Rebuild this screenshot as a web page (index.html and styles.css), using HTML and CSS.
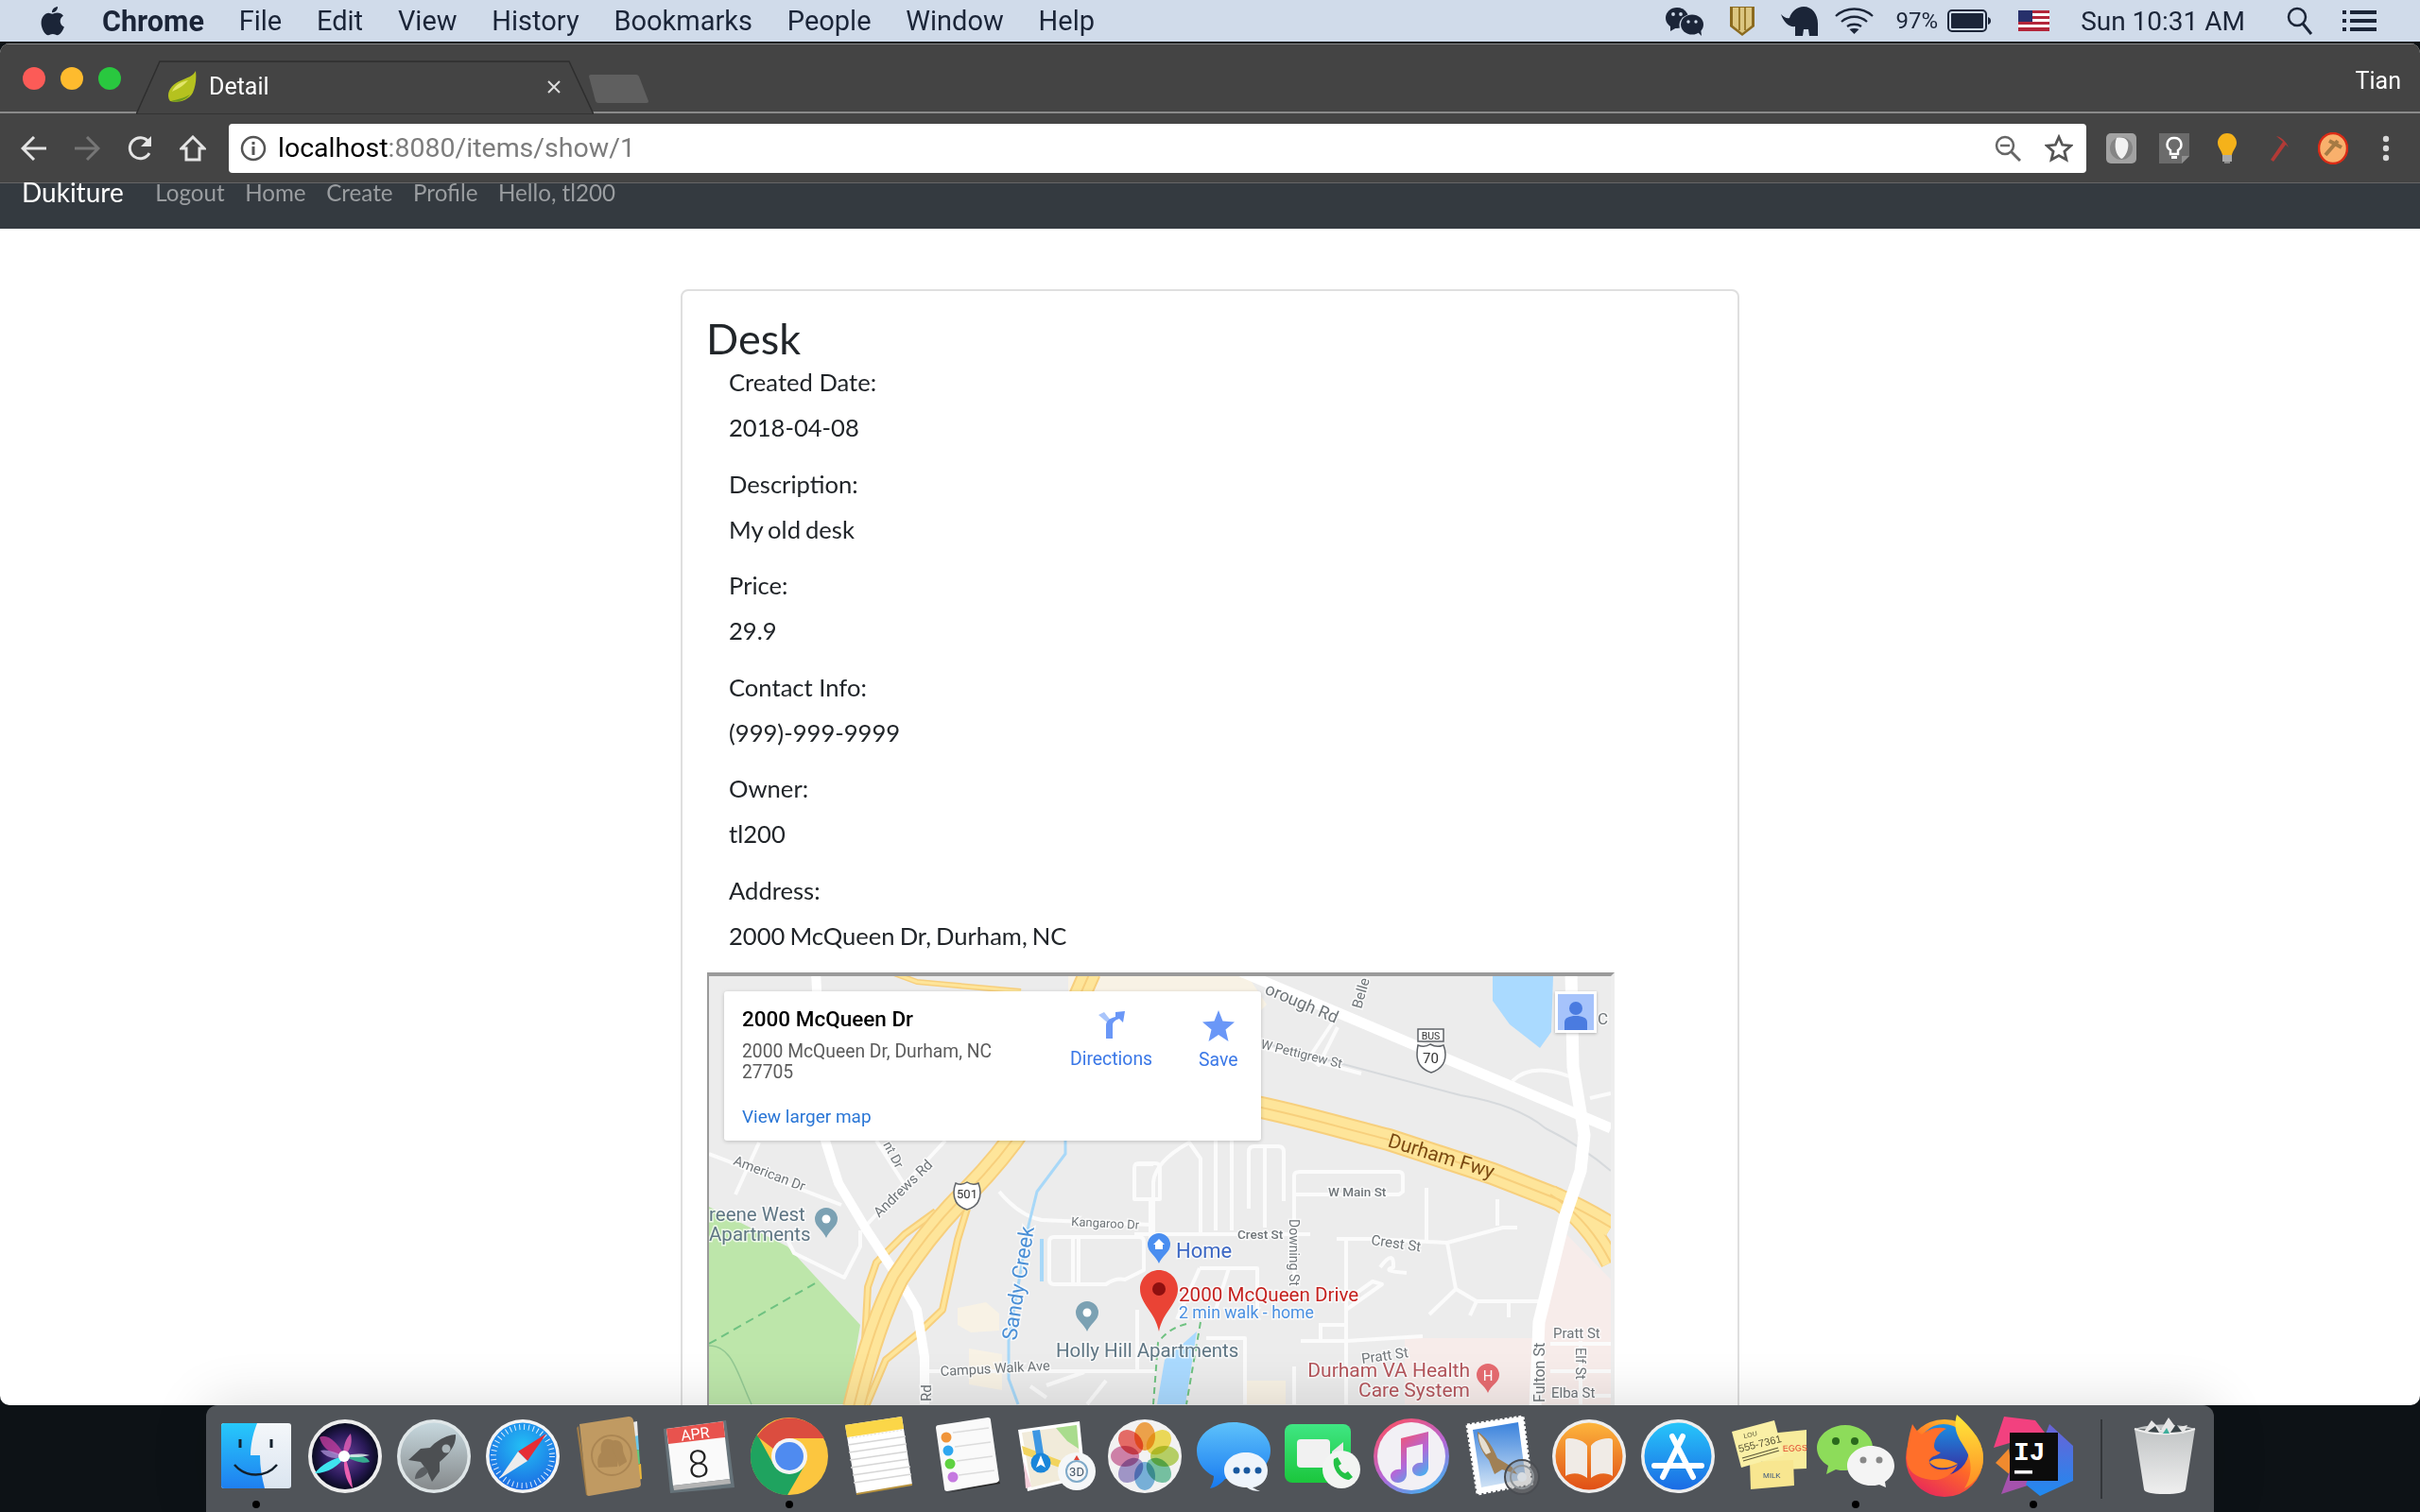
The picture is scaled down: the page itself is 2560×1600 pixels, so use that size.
FILE: index.html
```html
<!DOCTYPE html>
<html lang="en">
<head>
    <meta charset="UTF-8">
    <title>Detail</title>
    <link rel="stylesheet" href="styles.css">
</head>
<body>

<!-- macOS menu bar -->
<header class="menubar">
    <svg class="apple" width="26" height="32" viewBox="0 0 26 32"><path fill="#1b2538" d="M18 1c.3 3-2.600 6.500-6 6.200C11.700 4.200 14.800 1.300 18 1zM12.200 8.700c1.500 0 3-1.200 5.500-1.200 2.300 0 4.800 1.100 6.300 3.300-4.900 2.900-4.100 9.600.9 11.700-1.400 3.700-4.300 8.700-7.200 8.700-1.800 0-2.700-1.200-4.800-1.200-2.200 0-3.200 1.200-4.900 1.200C4.500 31.200.6 23.900.6 18.400.6 12 4.700 7.800 8.400 7.800c1.500 0 2.700.9 3.800.9z"/></svg>
    <nav class="menu-items">
        <b>Chrome</b><span>File</span><span>Edit</span><span>View</span><span>History</span><span>Bookmarks</span><span>People</span><span>Window</span><span>Help</span>
    </nav>
    <div class="status-items">
        <svg width="41" height="31" viewBox="0 0 41 31"><ellipse cx="12" cy="12" rx="12" ry="11" fill="#1b2538"/><path fill="#1b2538" d="M5 19l0 7 7-4z"/><ellipse cx="28" cy="19.500" rx="13.500" ry="11.500" fill="#d0dbea"/><ellipse cx="28" cy="19" rx="12" ry="10.500" fill="#1b2538"/><path fill="#1b2538" d="M33 26l5 5-1-8z"/><g fill="#d0dbea"><circle cx="8" cy="8" r="1.900"/><circle cx="16" cy="8" r="1.900"/><circle cx="24" cy="16" r="1.700"/><circle cx="32" cy="16" r="1.700"/></g></svg>
        <svg class="tray-shield" width="26" height="31" viewBox="0 0 26 31"><path fill="#8b6a1f" d="M0 0h26v21L13 31 0 21z"/><path fill="#dcc681" d="M3 1h20v19l-10 8-10-8z"/><path fill="#9a7b2c" d="M9 1h2v24H9zM15 1h2v24h-2z"/></svg>
        <svg class="tray-elephant" width="39" height="31" viewBox="0 0 39 31"><path fill="#1b2538" d="M0 8c3 3 6 5 9 4C11 5 17 0 24 0c9 0 15 8 15 18v13h-9l-1-7h-5l-1 7h-8V21C9 22 3 17 0 8z"/></svg>
        <svg class="tray-wifi" width="41" height="28" viewBox="0 0 41 28"><g fill="none" stroke="#1b2538" stroke-width="2.300"><path d="M1 9c11-10 28-10 39 0"/><path d="M7 15c8-7 19-7 27 0"/><path d="M13 20c4-3 11-3 15 0"/></g><path fill="#1b2538" d="M20.500 28l-5-5c3-1.500 7-1.500 10 0z"/></svg>
        <span class="tray-text">97%</span>
        <svg class="tray-battery" width="46" height="24" viewBox="0 0 46 24"><rect x="1" y="1" width="40" height="22" rx="4" fill="none" stroke="#1b2538" stroke-width="2"/><rect x="4" y="4" width="34" height="16" rx="1" fill="#1b2538"/><path fill="#1b2538" d="M43 8q3 1 3 4t-3 4z"/></svg>
        <svg class="tray-flag" width="33" height="22" viewBox="0 0 33 22"><rect width="33" height="22" fill="#fff"/><g fill="#b3263a"><rect width="33" height="3"/><rect y="6" width="33" height="3"/><rect y="12" width="33" height="3"/><rect y="18" width="33" height="4"/></g><rect width="15" height="12" fill="#27306b"/></svg>
        <span class="tray-clock">Sun 10:31 AM</span>
        <svg class="tray-search" width="28" height="30" viewBox="0 0 28 30"><circle cx="11" cy="11" r="9" fill="none" stroke="#1b2538" stroke-width="2.500"/><path d="M17 18l9 11" stroke="#1b2538" stroke-width="3"/></svg>
        <svg class="tray-list" width="36" height="24" viewBox="0 0 36 24"><g fill="#1b2538"><rect y="1" width="4" height="4"/><rect x="8" y="1" width="28" height="4"/><rect y="10" width="4" height="4"/><rect x="8" y="10" width="28" height="4"/><rect y="19" width="4" height="4"/><rect x="8" y="19" width="28" height="4"/></g></svg>
    </div>
</header>

<div class="browser">
    <!-- tab strip -->
    <div class="tabstrip">
        <div class="traffic">
            <i class="light red"></i><i class="light yellow"></i><i class="light green"></i>
        </div>
        <div class="tab">
            <svg class="tab-shape" width="484" height="57" viewBox="0 0 484 57"><path d="M0 57L25 1h433l26 56z" fill="#444" stroke="#2e2e2e" stroke-width="1.500"/></svg>
            <svg class="favicon" width="32" height="33" viewBox="0 0 32 33"><path fill="#b5c21f" d="M30 0c-3 6-9 7-15 10C7 13 1 19 1 26c0 3 1 5 2 6 8 2 19 0 24-9 3-7 4-15 3-23z"/><path fill="#e3e66a" d="M22 10c-6 1-14 4-17 12 6-3 12-6 17-12z"/><path fill="#6f9a1c" d="M4 32c6-2 14-3 20-7-5 6-13 9-20 7z"/></svg>
            <span class="tab-title">Detail</span>
            <svg class="tab-close" width="14" height="14" viewBox="0 0 14 14"><path d="M1 1l12 12M13 1L1 13" stroke="#ddd" stroke-width="2"/></svg>
        </div>
        <svg class="new-tab" width="63" height="30" viewBox="0 0 63 30"><path fill="#5f5f5f" d="M0 2q0-2 2-2h48q2 0 3 2l10 26q0 2-2 2H10q-2 0-3-2z"/></svg>
        <span class="profile">Tian</span>
    </div>

    <!-- toolbar -->
    <div class="toolbar">
        <button class="tool"><svg width="28" height="26" viewBox="0 0 28 26"><path d="M14 1L2 13l12 12M2 13h25" fill="none" stroke="#e4e4e4" stroke-width="3"/></svg></button>
        <button class="tool"><svg width="28" height="26" viewBox="0 0 28 26"><path d="M14 1l12 12-12 12M26 13H1" fill="none" stroke="#767676" stroke-width="3"/></svg></button>
        <button class="tool"><svg width="28" height="30" viewBox="0 0 28 30"><path d="M24 20a11 11 0 1 1-1-12" fill="none" stroke="#e4e4e4" stroke-width="3"/><path fill="#e4e4e4" d="M26 2v11H15z"/></svg></button>
        <button class="tool"><svg width="28" height="28" viewBox="0 0 28 28"><path d="M14 2L2 14h5v12h14V14h5z" fill="none" stroke="#e4e4e4" stroke-width="3"/></svg></button>
        <div class="omnibox">
            <svg class="site-info" width="28" height="28" viewBox="0 0 28 28"><circle cx="14" cy="14" r="12" fill="none" stroke="#555" stroke-width="2.500"/><rect x="12.500" y="12" width="3" height="9" fill="#555"/><rect x="12.500" y="7" width="3" height="3" fill="#555"/></svg>
            <span class="url"><b>localhost</b>:8080/items/show/1</span>
            <svg class="omni-zoom" width="28" height="28" viewBox="0 0 28 28"><circle cx="11" cy="11" r="9" fill="none" stroke="#666" stroke-width="2.500"/><path d="M6 11h10" stroke="#666" stroke-width="2.500"/><path d="M17 17l10 10" stroke="#666" stroke-width="3"/></svg>
            <svg class="omni-star" width="30" height="30" viewBox="0 0 30 30"><path d="M15 3l3.700 8.300 9 .9-6.800 6 2 8.800L15 22.500 7.100 27l2-8.800-6.800-6 9-.9z" fill="none" stroke="#555" stroke-width="2.800"/></svg>
        </div>
        <div class="extensions">
            <button class="tool"><svg width="32" height="32" viewBox="0 0 32 32"><rect width="32" height="32" rx="5" fill="#a2a2a2"/><circle cx="16" cy="16" r="12" fill="#858585"/><path fill="#f2f2f2" d="M11 5c9-2 14 3 12 11-1 6-5 11-7 11-6-4-8-14-5-22z"/></svg></button>
            <button class="tool"><svg width="32" height="32" viewBox="0 0 32 32"><path fill="#6b6b6b" d="M0 0h32v24l-8 8H0z"/><path fill="#8f8f8f" d="M24 32v-8h8z"/><path d="M16 5a7 7 0 0 0-4 13v4h8v-4a7 7 0 0 0-4-13z" fill="none" stroke="#fff" stroke-width="2.500"/><rect x="13" y="24" width="6" height="3" fill="#fff"/></svg></button>
            <button class="tool"><svg width="22" height="32" viewBox="0 0 22 32"><path fill="#f5b21a" d="M11 0c6 0 10 5 10 10 0 5-4 8-5 13H6C5 18 1 15 1 10 1 5 5 0 11 0z"/><rect x="6" y="23" width="10" height="7" fill="#a8a8a8"/><rect x="8" y="30" width="6" height="2" fill="#888"/></svg></button>
            <button class="tool"><svg width="24" height="30" viewBox="0 0 24 30"><path d="M8 2c5 1 10 5 13 12l-3-3L5 29l-3-2L15 8z" fill="#b23a36"/></svg></button>
            <button class="tool"><svg width="32" height="34" viewBox="0 0 32 34"><ellipse cx="16" cy="17" rx="15" ry="16" fill="#f9b06c" stroke="#d92b16" stroke-width="2.500"/><path d="M8 24l13-15M12 9l13 7" stroke="#a67a44" stroke-width="4"/></svg></button>
            <button class="tool"><svg width="8" height="28" viewBox="0 0 8 28"><circle cx="4" cy="4" r="3.200" fill="#d8d8d8"/><circle cx="4" cy="14" r="3.200" fill="#d8d8d8"/><circle cx="4" cy="24" r="3.200" fill="#d8d8d8"/></svg></button>
        </div>
    </div>

    <!-- site navbar -->
    <nav class="navbar">
        <a class="brand">Dukiture</a>
        <a class="nav-link">Logout</a>
        <a class="nav-link">Home</a>
        <a class="nav-link">Create</a>
        <a class="nav-link">Profile</a>
        <a class="nav-link">Hello, tl200</a>
    </nav>

    <main class="content">
        <section class="card">
            <h2>Desk</h2>
            <div class="field"><label>Created Date:</label><p>2018-04-08</p></div>
            <div class="field"><label>Description:</label><p>My old desk</p></div>
            <div class="field"><label>Price:</label><p>29.9</p></div>
            <div class="field"><label>Contact Info:</label><p>(999)-999-9999</p></div>
            <div class="field"><label>Owner:</label><p>tl200</p></div>
            <div class="field"><label>Address:</label><p>2000 McQueen Dr, Durham, NC</p></div>

            <!-- embedded map, viewBox uses page coordinates -->
            <div class="map">
                <svg class="map-canvas" width="954" height="592" viewBox="750 1034 954 592">
                    <rect x="750" y="1034" width="954" height="592" fill="#ececec"/>
                    <path fill="#f8f2e5" d="M1130 1034h190l20 30-40 40h-170z"/>
                    <path fill="#bde6aa" d="M750 1278l83 42 77 83-14 84H750z"/>
                    <path d="M750 1423l114-65" fill="none" stroke="#6fc281" stroke-width="2" stroke-dasharray="9 6"/>
                    <path d="M750 1425c25 0 30 30 45 62" fill="none" stroke="#93c893" stroke-width="1.500"/>
                    <path fill="#f7ecea" d="M1655 1305l49 50v132h-218v-70h142z"/>
                    <path fill="#f8f2e5" d="M1013 1385l30-6 14 12v18l-30 2-14-8zM1025 1428l35 6v38l-35-6zM1315 1462h45v25h-45z"/>
                    <path fill="#aadaff" d="M1579 1034h64l-2 59-12 17-32-25-18-25z"/>
                    <path fill="#aadaff" d="M1232 1440l34-30-12 77h-30z"/>

                    <!-- local roads -->
                    <g fill="none" stroke="#fbfbfb" stroke-width="4" stroke-linejoin="round">
                        <path d="M750 1222l140 54"/>
                        <path d="M917 1297l83-89"/>
                        <path d="M927 1208l30 47"/>
                        <path d="M803 1210l-25 55"/>
                        <path d="M1057 1262q22 26 45 30l115 5"/>
                        <path d="M983 1452h240"/>
                        <path d="M833 1313l7 14 53 26 17-33v-17"/>
                        <path d="M1115 1310h90q5 0 5 5v30l-20 10q-10-2-20 5h-55q-5 0-5-5v-40q0-5 5-5zM1135 1310v50M1141 1310v50"/>
                        <path d="M1200 1270v-33q0-5 5-5h17q5 0 5 5v33zM1217 1270v47M1203 1387v65"/>
                        <path d="M1200 1233h20M1220 1307v-55q2-22 38-42l12 17v80M1200 1307h186"/>
                        <path d="M1286 1208v95M1303 1208v95"/>
                        <path d="M1321 1280v-60q0-6 6-6h25q6 0 6 6v52M1338 1214v86"/>
                        <path d="M1369 1360v-115q0-4 6-4h105q4 0 4 5v16l-4 3h-111"/>
                        <path d="M1414 1312h36l81 4 59-16h15M1509 1258v57M1584 1270v28"/>
                        <path d="M1531 1316l9 49 22 13h66M1540 1365l-28 27M1562 1378l-7 15M1596 1378v17"/>
                        <path d="M1424 1312v175M1424 1387l38-27-10-3-28 20"/>
                        <path d="M1376 1420h48l81-5M1397 1403v17M1395 1403h29"/>
                        <path d="M1269 1343h61v47M1269 1343l-24 54M1300 1343l-14 44"/>
                        <path d="M1276 1417h41v70M1369 1447v40"/>
                        <path d="M1460 1342q15-20 14 0-14 4 14 6"/>
                        <path d="M1440 1137l-105-28M1415 1075l-30 45 10 8 20-40"/>
                        <path d="M1600 1145q20-20 60-5M1682 1163l22-5"/>
                        <path d="M1640 1423h64M1640 1452h64M1640 1478h64M1672 1420v67"/>
                        <path d="M1090 1468l17 12M1107 1467l40-14M1150 1487l20-25"/>
                    </g>
                    <path d="M1334 1104l211 56q60 10 90 35 40 20 69 45" fill="none" stroke="#d6d9dc" stroke-width="2"/>
                    <path d="M1127 1208v14l-30 40-9 36-21 122v40l10 27" fill="none" stroke="#a8d8f8" stroke-width="3"/>
                    <path d="M1102 1312v45" stroke="#a8d8f8" stroke-width="4"/>
                    <path d="M1255 1402q-20 5-30 20l-5 65M1270 1400l-15 87" fill="none" stroke="#6fc281" stroke-width="2" stroke-dasharray="7 5"/>

                    <!-- ramps, then white roads, then highways on top -->
                    <g fill="none" stroke-linejoin="round" stroke-linecap="butt">
                        <path stroke="#f7cf7c" stroke-width="8" d="M990 1283l-33 24-30 30-9 26-3 57v70"/>
                        <path stroke="#fee59a" stroke-width="4" d="M990 1283l-33 24-30 30-9 26-3 57v70"/>
                        <path stroke="#f7cf7c" stroke-width="8" d="M1023 1280l-10 33-13 60-3 14-27 26-33 27-20 47"/>
                        <path stroke="#fee59a" stroke-width="4" d="M1023 1280l-10 33-13 60-3 14-27 26-33 27-20 47"/>
                        <path stroke="#f7cf7c" stroke-width="6" d="M943 1030l27 10 33 3 77 7"/>
                        <path stroke="#fee59a" stroke-width="3" d="M943 1030l27 10 33 3 77 7"/>
                    </g>
                    <g fill="none" stroke="#fff" stroke-linejoin="round">
                        <path stroke-width="10" d="M863 1030l10 178 14 45 30 50 33 50 20 34 8 50v50"/>
                        <path stroke-width="11" d="M1310 1028l394 167"/>
                    </g>
                    <g fill="none" stroke-linejoin="round">
                        <path stroke="#f7cf7c" stroke-width="24" d="M1153 1030l-70 160q-23 35-60 73-38 37-73 90-25 47-47 137"/>
                        <path stroke="#fee59a" stroke-width="20" d="M1153 1030l-70 160q-23 35-60 73-38 37-73 90-25 47-47 137"/>
                        <path stroke="#f7cf7c" stroke-width="2" d="M1153 1030l-70 160q-23 35-60 73-38 37-73 90-25 47-47 137"/>
                        <path stroke="#f7cf7c" stroke-width="24" d="M1320 1170c60 12 100 25 149 37l110 36 69 27q30 14 56 30"/>
                        <path stroke="#f7cf7c" stroke-width="22" d="M1640 1265q40 25 64 72"/>
                        <path stroke="#fee59a" stroke-width="20" d="M1320 1170c60 12 100 25 149 37l110 36 69 27q30 14 56 30"/>
                        <path stroke="#fee59a" stroke-width="18" d="M1640 1265q40 25 64 72"/>
                        <path stroke="#f7cf7c" stroke-width="2" d="M1320 1170c60 12 100 25 149 37l110 36 69 27q30 14 56 30M1640 1265q40 25 64 72"/>
                    </g>
                    <path fill="none" stroke="#fff" stroke-width="13" stroke-linejoin="round" d="M1662 1030l2 100 12 72-4 38-17 50-27 110-4 90"/>

                    <!-- labels -->
                    <g class="label road">
                        <text transform="translate(1337 1052) rotate(23)" font-size="18">orough Rd</text>
                        <text transform="translate(1440 1069) rotate(-74)" font-size="15">Belle</text>
                        <text transform="translate(1333 1110) rotate(14)" font-size="13.500">W Pettigrew St</text>
                        <text x="1405" y="1267" font-size="13.500" font-weight="500">W Main St</text>
                        <text x="1309" y="1312" font-size="13.500" font-weight="500">Crest St</text>
                        <text transform="translate(1450 1318) rotate(8)" font-size="15">Crest St</text>
                        <text transform="translate(1364 1291) rotate(90)" font-size="14">Downing St</text>
                        <text transform="translate(775 1233) rotate(21)" font-size="14.500">American Dr</text>
                        <text transform="translate(930 1290) rotate(-44)" font-size="15">Andrews Rd</text>
                        <text transform="translate(934 1212) rotate(62)" font-size="14">nt Dr</text>
                        <text transform="translate(1133 1298) rotate(3)" font-size="13">Kangaroo Dr</text>
                        <text transform="translate(995 1457) rotate(-3)" font-size="14.500">Campus Walk Ave</text>
                        <text transform="translate(985 1484) rotate(-90)" font-size="15">Rd</text>
                        <text transform="translate(1441 1444) rotate(-8)" font-size="15">Pratt St</text>
                        <text x="1643" y="1417" font-size="15">Pratt St</text>
                        <text transform="translate(1667 1427) rotate(90)" font-size="14.500">Elf St</text>
                        <text x="1641" y="1480" font-size="15">Elba St</text>
                        <text transform="translate(1634 1485) rotate(-90)" font-size="16">Fulton St</text>
                        <text x="1690" y="1085" font-size="17">C</text>
                    </g>
                    <text class="label fwy" transform="translate(1467 1214) rotate(17)" font-size="21">Durham Fwy</text>
                    <text class="label creek" transform="translate(1075 1420) rotate(-81)" font-size="22">Sandy Creek</text>
                    <g class="label poi">
                        <text x="750" y="1293" font-size="20.500">reene West</text>
                        <text x="750" y="1314" font-size="20.500">Apartments</text>
                        <text x="1117" y="1437" font-size="20.500">Holly Hill Apartments</text>
                    </g>
                    <text class="label home" x="1244" y="1332" font-size="22">Home</text>
                    <text class="label place" x="1247" y="1378" font-size="20.600">2000 McQueen Drive</text>
                    <text class="label walk" x="1247" y="1396" font-size="17.700">2 min walk - home</text>
                    <g class="label hospital" text-anchor="end">
                        <text x="1555" y="1458" font-size="21">Durham VA Health</text>
                        <text x="1555" y="1479" font-size="21">Care System</text>
                    </g>

                    <!-- pins -->
                    <path fill="#7ba1b3" d="M874 1279a12 12 0 0 1 12 12c0 8-9 12-12 20-3-8-12-12-12-20a12 12 0 0 1 12-12z"/><circle cx="874" cy="1291" r="4.500" fill="#fff"/>
                    <path fill="#7ba1b3" d="M1150 1378a12 12 0 0 1 12 12c0 8-9 12-12 20-3-8-12-12-12-20a12 12 0 0 1 12-12z"/><circle cx="1150" cy="1390" r="4.500" fill="#fff"/>
                    <path fill="#4a8ef0" d="M1226 1306a12 12 0 0 1 12 12c0 8-9 12-12 20-3-8-12-12-12-20a12 12 0 0 1 12-12z"/><path fill="#fff" d="M1226 1312l6 6h-2v5h-8v-5h-2z"/>
                    <path fill="#e66b70" d="M1574 1444a12 12 0 0 1 12 12c0 8-9 11-12 19-3-8-12-11-12-19a12 12 0 0 1 12-12z"/><text class="label pin-h" x="1574" y="1462" font-size="15" text-anchor="middle">H</text>
                    <path fill="#ea4335" d="M1226 1345c11 0 20 9 20 20 0 16-16 24-20 45-4-21-20-29-20-45 0-11 9-20 20-20z"/><circle cx="1226" cy="1365" r="7" fill="#8f1010"/>

                    <!-- highway shields -->
                    <path fill="#fff" stroke="#5f6368" stroke-width="1.500" d="M1011 1253q6 3 12-1 6 4 12 1 2 5 2 10 0 14-14 18-14-4-14-18 0-5 2-10z"/>
                    <text class="label shield" x="1023" y="1269" font-size="13" text-anchor="middle">501</text>
                    <rect x="1500" y="1090" width="27" height="13" fill="#fff" stroke="#5f6368" stroke-width="1.500"/>
                    <text class="label shield" x="1513.500" y="1101" font-size="10.500" text-anchor="middle">BUS</text>
                    <path fill="#fff" stroke="#5f6368" stroke-width="1.500" d="M1500 1107q7 3 13-1 7 4 14 1 2 5 2 10 0 14-15 19-15-5-15-19 0-5 1-10z"/>
                    <text class="label shield" x="1513.500" y="1126" font-size="15" text-anchor="middle">70</text>
                </svg>

                <!-- pegman button -->
                <div class="pegman">
                    <svg width="38" height="38" viewBox="0 0 38 38"><rect width="38" height="38" fill="#a6c3fb"/><circle cx="19" cy="15" r="7" fill="#4a7be0"/><path fill="#4a7be0" d="M7 38v-8c0-5 5-7 12-7s12 2 12 7v8z"/></svg>
                </div>

                <!-- info window -->
                <div class="place-card">
                    <div class="place-info">
                        <div class="place-name">2000 McQueen Dr</div>
                        <div class="place-address">2000 McQueen Dr, Durham, NC 27705</div>
                        <a class="place-link">View larger map</a>
                    </div>
                    <div class="place-action directions">
                        <svg width="30" height="30" viewBox="0 0 30 30"><path fill="#a9c5fb" d="M1 5l6-3 8 10v5z"/><path fill="#6a97f7" d="M16 30h-7V16c0-5 5-8 10-9V2l10-1-2 12-4-4c-3 1-7 3-7 7z"/></svg>
                        <span>Directions</span>
                    </div>
                    <div class="place-action save">
                        <svg width="34" height="33" viewBox="0 0 34 33"><path fill="#6a97f7" d="M17 0l4.500 11.500L34 12.500l-9.500 8L27.500 33 17 26 6.500 33l3-12.500-9.500-8 12.500-1z"/></svg>
                        <span>Save</span>
                    </div>
                </div>
            </div>
        </section>
    </main>
</div>

<!-- dock: every icon is an 88px box centred on its slot -->
<footer class="dock">
    <div class="dock-item on">
        <svg width="88" height="88" viewBox="0 0 88 88"><defs><linearGradient id="fin" x1="0" y1="0" x2="0" y2="1"><stop offset="0" stop-color="#27c9fb"/><stop offset="1" stop-color="#1f7ff0"/></linearGradient><linearGradient id="fin2" x1="0" y1="0" x2="0" y2="1"><stop offset="0" stop-color="#f4f7fa"/><stop offset="1" stop-color="#dbe5f0"/></linearGradient></defs><rect x="7" y="9" width="74" height="69" rx="3" fill="url(#fin2)"/><path fill="url(#fin)" d="M10 9h35c-4 10-7 22-7 34h10c0 12 2 24 5 35H10q-3 0-3-3V12q0-3 3-3z"/><path d="M27 26v9M60 26v9" stroke="#13202c" stroke-width="3"/><path d="M21 53c12 14 33 14 45 0" fill="none" stroke="#13202c" stroke-width="2.500"/></svg>
    </div>
    <div class="dock-item">
        <svg width="88" height="88" viewBox="0 0 88 88"><defs><radialGradient id="sir"><stop offset="0" stop-color="#6a3f9c"/><stop offset=".65" stop-color="#2a1a58"/><stop offset="1" stop-color="#090b20"/></radialGradient></defs><circle cx="44" cy="44" r="39" fill="#ededed"/><circle cx="44" cy="44" r="35" fill="url(#sir)"/><path fill="#c83fa0" opacity=".75" d="M44 44C34 26 24 20 17 24c3 12 12 18 27 20z"/><path fill="#b79be0" opacity=".7" d="M44 44c-10-4-20-8-26-6 6 8 16 10 26 6z"/><path fill="#e660b8" opacity=".8" d="M42 44c0-10 2-18 8-24 2 10 0 18-8 24z"/><path fill="#3fe3ee" d="M44 44C30 46 18 54 12 62 26 62 38 54 44 44z"/><path fill="#35b894" opacity=".9" d="M44 44c10 6 20 8 26 6-2-6-14-10-26-6z"/><path fill="#e8f6f2" opacity=".8" d="M44 44c8-3 18-3 26-1-8 2-18 3-26 1z"/><path fill="#ea5fb0" d="M44 44c3 10 7 22 8 34-7-8-11-22-8-34z"/><circle cx="43" cy="44" r="6" fill="#fff"/></svg>
    </div>
    <div class="dock-item">
        <svg width="88" height="88" viewBox="0 0 88 88"><defs><linearGradient id="lau" x1="0" y1="0" x2="0" y2="1"><stop offset="0" stop-color="#c7d8de"/><stop offset="1" stop-color="#85898b"/></linearGradient></defs><circle cx="44" cy="44" r="39" fill="#dfe6e8"/><circle cx="44" cy="44" r="35.500" fill="url(#lau)"/><path fill="#4c4f52" d="M67 21c-7 0-19 5-27 14l-10 1-13 12 13 2 6 8 6 13 8-11v-10c10-8 18-18 17-29z"/><circle cx="57" cy="36" r="4.500" fill="#aab5b9"/><path fill="#5a5e62" d="M34 55c-8 3-10 9-10 13 6 0 12-4 14-8z"/></svg>
    </div>
    <div class="dock-item">
        <svg width="88" height="88" viewBox="0 0 88 88"><defs><radialGradient id="saf" cy=".35" r=".75"><stop offset="0" stop-color="#23c0f5"/><stop offset="1" stop-color="#1a5fe0"/></radialGradient></defs><circle cx="44" cy="44" r="39" fill="#f4f4f4"/><circle cx="44" cy="44" r="35.500" fill="url(#saf)"/><circle cx="44" cy="44" r="31" fill="none" stroke="#fff" stroke-width="6" stroke-dasharray="1 3.900" opacity=".85"/><path fill="#e62e35" d="M69 20L39 39l10 10z"/><path fill="#ececec" d="M19 68l30-19-10-10z"/></svg>
    </div>
    <div class="dock-item">
        <svg width="88" height="88" viewBox="0 0 88 88"><path fill="#e9e9e9" d="M66 8l5-1 1 16-4 1z"/><path fill="#6bc8ec" d="M68 23l4-1 1 15-4 1z"/><path fill="#62cc7d" d="M69 38l4-1 1 15-4 1z"/><path fill="#ecb83a" d="M71 53l4-1 1 16-4 1z"/><path fill="#9c7a48" d="M9 12l11 74-3-1L7 14z"/><path fill="#c09a62" d="M10 10l52-8q4 0 5 4l8 68q0 2-3 3L20 86q-2 0-2-2z"/><circle cx="44" cy="43" r="21" fill="none" stroke="#ab8653" stroke-width="2"/><path fill="#ab8653" d="M30 56c-2-8 0-13 3-16-2-10 3-15 8-14 6 0 9 7 7 15 3 3 3 9 2 14z"/><path fill="#ab8653" d="M44 28c6-3 12 1 12 8 0 6 4 10 4 14l-8 5-3-10c-3-5-5-10-5-17z"/></svg>
    </div>
    <div class="dock-item">
        <svg width="88" height="88" viewBox="0 0 88 88"><path fill="#66737a" d="M5 15l66-9 9 71-68 6z"/><path fill="#fafafa" d="M8 15l60-8 7 61-60 7z"/><path fill="#e8534e" d="M8 15l60-8 2 17-60 7z"/><text class="cal-month" transform="translate(39 26) rotate(-7)" font-size="16" text-anchor="middle">APR</text><text class="cal-day" transform="translate(43 66) rotate(-5)" font-size="40" text-anchor="middle">8</text><path fill="#b4b4b4" d="M15 75l60-7 1 5-60 7z"/></svg>
    </div>
    <div class="dock-item on">
        <svg width="88" height="88" viewBox="0 0 88 88"><circle cx="44" cy="44" r="41" fill="#fcc63f"/><path fill="#1fa35f" d="M10 21A41 41 0 0 0 42 85l18-31-33-2z"/><path fill="#db4d3f" d="M10 23A41 41 0 0 1 81 25H44L27 36z"/><circle cx="44" cy="44" r="19" fill="#f4f4f4"/><circle cx="44" cy="44" r="15" fill="#4f8bf0"/></svg>
    </div>
    <div class="dock-item">
        <svg width="88" height="88" viewBox="0 0 88 88"><path fill="#fff" d="M9 11l60-9 11 72-59 10z"/><path fill="#fbd648" d="M9 11l60-9 2 13-60 9z"/><g stroke="#d6d6d6" stroke-width="1.500"><path d="M12 32l61-9M13 40l61-9M14 48l61-9M15 56l61-9M17 64l61-9M18 72l61-9"/></g><path d="M12 25l59-9" stroke="#ddd" stroke-dasharray="2 2"/><path fill="#b7923e" d="M21 83l59-10v2L21 85z"/></svg>
    </div>
    <div class="dock-item">
        <svg width="88" height="88" viewBox="0 0 88 88"><path fill="#2b2b2b" d="M21 83l58-10-1-3z"/><path fill="#fafafa" d="M14 11l52-8q3 0 3 3l9 63q0 2-3 3l-52 9q-3 0-3-3l-9-64q0-3 3-3z"/><g fill="none" stroke="#dcdcdc" stroke-width="1.500"><path d="M29 19l38-5M31 34l38-5M33 49l38-5M35 64l38-5"/></g><circle cx="22" cy="24" r="5.500" fill="#f0953a"/><circle cx="24" cy="38" r="5.500" fill="#2fa7f0"/><circle cx="26" cy="52" r="5.500" fill="#5fd241"/><circle cx="29" cy="66" r="5.500" fill="#c579e0"/></svg>
    </div>
    <div class="dock-item">
        <svg width="88" height="88" viewBox="0 0 88 88"><path fill="#fff" d="M4 16L69 7l6 60-61 14z"/><path fill="#f1ebda" d="M8 19l58-8 5 53-53 13z"/><path fill="#a9dc8d" d="M44 14l22-3 2 25-12-8z"/><path fill="#f2d45e" d="M8 33l58 22-2 7L10 42z"/><path fill="#f5cfdb" d="M10 50l8 26-6 2z"/><path fill="#3d97e3" d="M19 17l8-1 6 38h-8z"/><circle cx="28" cy="51" r="10.500" fill="#1a86da"/><path fill="#fff" d="M28 43l5 13-5-3-5 3z"/><circle cx="66" cy="60" r="20" fill="#f5f7f8"/><circle cx="66" cy="60" r="11" fill="none" stroke="#7faac9" stroke-width="2"/><text class="map-3d" x="66" y="65" font-size="13" text-anchor="middle">3D</text><path fill="#e04438" d="M66 43l3 5h-6z"/></svg>
    </div>
    <div class="dock-item">
        <svg width="88" height="88" viewBox="0 0 88 88"><circle cx="44" cy="44" r="39" fill="#f2f2f2"/><g transform="translate(44 44)"><g class="petals"><ellipse cy="-21" rx="11" ry="15" fill="#f9a13a"/><ellipse cy="-21" rx="11" ry="15" fill="#f6e04b" transform="rotate(45)"/><ellipse cy="-21" rx="11" ry="15" fill="#b8d55a" transform="rotate(90)"/><ellipse cy="-21" rx="11" ry="15" fill="#6cc3a0" transform="rotate(135)"/><ellipse cy="-21" rx="11" ry="15" fill="#6fb1e0" transform="rotate(180)"/><ellipse cy="-21" rx="11" ry="15" fill="#9f92cc" transform="rotate(225)"/><ellipse cy="-21" rx="11" ry="15" fill="#d47aa8" transform="rotate(270)"/><ellipse cy="-21" rx="11" ry="15" fill="#f0615b" transform="rotate(315)"/></g></g></svg>
    </div>
    <div class="dock-item">
        <svg width="88" height="88" viewBox="0 0 88 88"><defs><linearGradient id="msg" x1="0" y1="0" x2="0" y2="1"><stop offset="0" stop-color="#5ec2fb"/><stop offset="1" stop-color="#1779f0"/></linearGradient></defs><path fill="url(#msg)" d="M44 8c22 0 39 13 39 30S66 68 44 68c-3 0-6 0-9 0-4 5-10 9-16 10 2-4 4-8 4-13C12 60 5 50 5 38 5 21 22 8 44 8z"/><path fill="#eef4fb" d="M57 40c13 0 23 8 23 19s-8 17-16 18c3 2 6 3 8 4-5 0-10-1-14-4-13 0-24-7-24-18s10-19 23-19z"/><circle cx="47" cy="59" r="3.500" fill="#18589f"/><circle cx="58" cy="59" r="3.500" fill="#18589f"/><circle cx="70" cy="59" r="3.500" fill="#18589f"/></svg>
    </div>
    <div class="dock-item">
        <svg width="88" height="88" viewBox="0 0 88 88"><defs><linearGradient id="ft" x1="0" y1="0" x2="0" y2="1"><stop offset="0" stop-color="#3fe683"/><stop offset="1" stop-color="#1bc63c"/></linearGradient></defs><rect x="4" y="10" width="70" height="62" rx="8" fill="url(#ft)"/><rect x="17" y="26" width="35" height="30" rx="4" fill="#f1f1f1"/><path fill="#e8e8e8" d="M54 39l12-10v27H54z"/><circle cx="64" cy="58" r="20" fill="#f2f4f2"/><path fill="#23c246" d="M56 47l4-2 4 7-3 2c1 4 4 7 7 8l3-2 5 6-4 3c-10-1-18-12-16-22z"/></svg>
    </div>
    <div class="dock-item">
        <svg width="88" height="88" viewBox="0 0 88 88"><defs><linearGradient id="itr" x1=".2" y1="0" x2=".8" y2="1"><stop offset="0" stop-color="#fb5065"/><stop offset=".55" stop-color="#b467d8"/><stop offset="1" stop-color="#38b8f2"/></linearGradient></defs><circle cx="44" cy="44" r="40" fill="url(#itr)"/><circle cx="44" cy="44" r="36" fill="#f2f0f5"/><path fill="url(#itr)" d="M33 25l29-7v38c0 5-4 9-9 9s-8-3-8-7 5-8 11-7V31l-17 4v28c0 5-4 9-9 9s-8-3-8-7 5-8 11-7z"/></svg>
    </div>
    <div class="dock-item">
        <svg width="88" height="88" viewBox="0 0 88 88"><defs><linearGradient id="sky" x1="0" y1="0" x2="0" y2="1"><stop offset="0" stop-color="#3a82dc"/><stop offset="1" stop-color="#cfe2f5"/></linearGradient></defs><path fill="#fff" stroke="#fff" stroke-width="3" stroke-dasharray="3 2" d="M9 11l59-9 9 71-57 11z"/><path fill="#fff" d="M9 11l59-9 9 71-57 11z"/><path fill="url(#sky)" d="M15 16l48-8 8 60-47 9z"/><path fill="#a08055" d="M20 18c10 6 16 16 21 28l15 9 6 8-16-5-8 5-6-15c-8-8-12-20-12-30z"/><path fill="#e6dfd2" d="M21 20c6 5 10 12 13 20l-5 2c-5-6-8-14-8-22z"/><circle cx="67" cy="66" r="18" fill="#858585" opacity=".35"/><circle cx="67" cy="66" r="18" fill="none" stroke="#4a4d52" stroke-width="2"/><circle cx="67" cy="66" r="12" fill="none" stroke="#8e9397" stroke-width="2"/><circle cx="67" cy="66" r="5" fill="#d8dde2"/></svg>
    </div>
    <div class="dock-item">
        <svg width="88" height="88" viewBox="0 0 88 88"><defs><linearGradient id="bok" x1="0" y1="0" x2="0" y2="1"><stop offset="0" stop-color="#fdb53c"/><stop offset="1" stop-color="#e04f16"/></linearGradient></defs><circle cx="44" cy="44" r="39" fill="#eeeeee"/><circle cx="44" cy="44" r="35.500" fill="url(#bok)"/><path fill="#f0ebe6" d="M42 33c-4-6-12-8-19-8-3 0-4 1-4 3v37c6-4 16-4 23 2zM46 33c4-6 12-8 19-8 3 0 4 1 4 3v37c-6-4-16-4-23 2z"/></svg>
    </div>
    <div class="dock-item">
        <svg width="88" height="88" viewBox="0 0 88 88"><defs><linearGradient id="aps" x1="0" y1="0" x2="0" y2="1"><stop offset="0" stop-color="#27c5fa"/><stop offset="1" stop-color="#1b6be4"/></linearGradient></defs><circle cx="44" cy="44" r="39" fill="#eeeeee"/><circle cx="44" cy="44" r="35.500" fill="url(#aps)"/><g stroke="#fff" stroke-width="6" stroke-linecap="round"><path d="M49 23L28 66"/><path d="M38 23l22 43"/><path d="M19 54h50"/></g></svg>
    </div>
    <div class="dock-item">
        <svg width="88" height="88" viewBox="0 0 88 88"><path fill="#f8ec9c" d="M37 21l49-5v41l-46 2z"/><path fill="#f8e690" d="M26 50l46-2 1 27-46 4z"/><path fill="#faf0a6" d="M7 18l45-12 10 37-45 13z"/><text class="sticky-note" transform="translate(20 25) rotate(-12)" font-size="7">LOU</text><text class="sticky-note" transform="translate(15 40) rotate(-14)" font-size="11">555-7361</text><path d="M18 46l38-11M19 49l38-11" fill="none" stroke="#5c5838" stroke-width="1.200"/><text class="sticky-eggs" transform="translate(61 39) rotate(-2)" font-size="9">EGGS</text><text class="sticky-milk" transform="translate(40 67)" font-size="8">MILK</text></svg>
    </div>
    <div class="dock-item on">
        <svg width="88" height="88" viewBox="0 0 88 88"><path fill="#8ddc5a" d="M33 11c16 0 29 11 29 24S49 59 33 59c-4 0-7 0-10-1l-10 5 2-9C8 50 3 43 3 35c0-13 14-24 30-24z"/><circle cx="23" cy="28" r="4" fill="#2a6a1c"/><circle cx="43" cy="28" r="4" fill="#2a6a1c"/><path fill="#f4f4f4" d="M60 33c14 0 25 9 25 21 0 7-4 13-10 17l1 6-7-3c-3 1-6 1-9 1-14 0-25-10-25-21s11-21 25-21z"/><circle cx="52" cy="48" r="3.500" fill="#888"/><circle cx="69" cy="48" r="3.500" fill="#888"/></svg>
    </div>
    <div class="dock-item">
        <svg width="88" height="88" viewBox="0 0 88 88"><defs><linearGradient id="ffx" x1=".8" y1="0" x2=".2" y2="1"><stop offset="0" stop-color="#ffd02e"/><stop offset=".5" stop-color="#ff6a27"/><stop offset="1" stop-color="#e6245e"/></linearGradient><linearGradient id="ffg" x1="0" y1="0" x2="0" y2="1"><stop offset="0" stop-color="#1a8fe3"/><stop offset="1" stop-color="#3a2a9e"/></linearGradient><linearGradient id="ffy" x1="0" y1="0" x2="0" y2="1"><stop offset="0" stop-color="#ffe93b"/><stop offset="1" stop-color="#ff8a24"/></linearGradient></defs><circle cx="44" cy="46" r="41" fill="url(#ffx)"/><circle cx="43" cy="37" r="27" fill="url(#ffg)"/><path fill="#ff6f2a" d="M4 46c0-14 3-26 6-36 3 5 6 9 10 11 7-6 18-9 26-6-7 3-13 11-13 18 0 3 2 6 7 7-4 4-9 3-12 8-1 4 3 9 10 10 7 1 14-1 20-5-6 12-18 17-28 16C14 67 4 60 4 46z"/><path fill="#ff9828" d="M28 50c6-6 20-4 30 2-10 6-24 6-30-2z"/><path fill="url(#ffy)" d="M57 0c11 10 28 26 28 46 0 14-8 26-20 32 8-12 8-26 4-36-5-12-18-22-12-42z"/></svg>
    </div>
    <div class="dock-item on">
        <svg width="88" height="88" viewBox="0 0 88 88"><defs><linearGradient id="ijb" x1="0" y1="0" x2="0" y2="1"><stop offset="0" stop-color="#6b62d6"/><stop offset="1" stop-color="#1f8af0"/></linearGradient></defs><path fill="#f08a2e" d="M4 51l14-15 4 30z"/><path fill="#a552ad" d="M19 60l-9 24 34-11z"/><path fill="url(#ijb)" d="M61 10l25 23v37L51 86 36 74z"/><path fill="#f2417f" d="M13 2l33 4 10 13L2 35z"/><rect x="19" y="19" width="51" height="51" fill="#0c0c0c"/><text class="ij" x="23" y="48" font-size="28">IJ</text><rect x="24" y="59" width="19" height="3.500" fill="#fff"/></svg>
    </div>
    <div class="dock-sep"></div>
    <div class="dock-item">
        <svg width="88" height="88" viewBox="0 0 88 88"><defs><linearGradient id="trs" x1="0" y1="0" x2="0" y2="1"><stop offset="0" stop-color="#bfc2c3"/><stop offset="1" stop-color="#efefef"/></linearGradient></defs><path fill="url(#trs)" d="M12 15c18-6 46-6 64 0l-10 64q-1 5-22 5t-22-5z"/><path d="M12 15c18 7 46 7 64 0" fill="#6a7072" stroke="#efefef" stroke-width="2"/><path fill="#e6e6e6" d="M22 18l8-12 10 10 8-13 8 11 12-3-4 9z"/><path fill="#3a4448" d="M26 18l8-6 4 7zM50 19l6-9 6 8z"/><path fill="#3fae9c" d="M42 20l4-6 3 6z"/></svg>
    </div>
</footer>
</body>
</html>
```

FILE: styles.css
```css
/* page frame */
body {
    margin: 0;
    width: 2560px;
    height: 1600px;
    overflow: hidden;
    position: relative;
    background-color: #0d1216;
    font-family: "Lato", sans-serif;
}

svg {
    display: block;
    flex: none;
}

/* menu bar */
.menubar {
    display: flex;
    align-items: center;
    height: 44px;
    padding-left: 43px;
    background-color: #d0dbea;
    color: #1b2538;
    font-family: "Roboto", sans-serif;
    font-size: 29px;
}

.menu-items {
    display: flex;
    gap: 36.8px;
    margin-left: 39px;
}

.menu-items b {
    font-size: 30.5px;
    font-weight: 700;
}

.status-items {
    display: flex;
    align-items: center;
    margin-left: auto;
    padding-right: 46px;
}

.tray-shield { margin-left: 27px; }
.tray-elephant { margin-left: 28px; }
.tray-wifi { margin-left: 18px; }
.tray-text { margin-left: 24px; font-size: 24px; }
.tray-battery { margin-left: 10px; }
.tray-flag { margin-left: 29px; }
.tray-clock { margin-left: 33px; font-size: 28px; }
.tray-search { margin-left: 44px; }
.tray-list { margin-left: 31px; }

/* browser window */
.browser {
    display: flex;
    flex-direction: column;
    height: 1441px;
    margin-top: 2px;
    overflow: hidden;
    border-radius: 10px;
    background-color: #fff;
}

.tabstrip {
    display: flex;
    align-items: flex-end;
    flex: none;
    height: 71px;
    border-top: 1px solid #8c8c8c;
    border-bottom: 2px solid #8a8a8a;
    background-color: #444;
    font-family: "Roboto", sans-serif;
}

.traffic {
    display: flex;
    gap: 16px;
    width: 144px;
    box-sizing: border-box;
    padding: 0 0 23px 24px;
}

.light {
    display: block;
    width: 24px;
    height: 24px;
    border-radius: 50%;
}

.red { background-color: #fc5b57; }
.yellow { background-color: #febb2e; }
.green { background-color: #29c83f; }

.tab {
    display: flex;
    align-items: center;
    position: relative;
    width: 484px;
    height: 56px;
    margin-bottom: -2px;
    padding-bottom: 1px;
    box-sizing: border-box;
}

.tab-shape {
    position: absolute;
    left: 0;
    top: 0;
}

.favicon {
    position: relative;
    margin-left: 33px;
}

.tab-title {
    position: relative;
    margin-left: 12px;
    color: #fff;
    font-size: 25px;
}

.tab-close {
    position: relative;
    margin-left: auto;
    margin-right: 35px;
}

.new-tab {
    margin: 0 0 9px -5px;
}

.profile {
    margin: 0 20px 18px auto;
    color: #fff;
    font-size: 25px;
}

.toolbar {
    display: flex;
    align-items: center;
    flex: none;
    height: 73px;
    padding-left: 8px;
    border-bottom: 1px solid #666;
    background-color: #444;
}

.tool {
    display: flex;
    align-items: center;
    justify-content: center;
    width: 56px;
    height: 50px;
    padding: 0;
    border: none;
    background: none;
}

.omnibox {
    display: flex;
    align-items: center;
    width: 1965px;
    height: 52px;
    margin-left: 10px;
    box-sizing: border-box;
    padding: 0 14px 0 12px;
    border-radius: 4px;
    background-color: #fff;
}

.url {
    margin-left: 12px;
    color: #7c7c7c;
    font-family: "Roboto", sans-serif;
    font-size: 28.5px;
}

.url b {
    color: #000;
    font-weight: 400;
}

.omni-zoom {
    margin-left: auto;
}

.omni-star {
    margin-left: 25px;
}

.extensions {
    display: flex;
    margin-left: 9px;
}

/* site navbar */
.navbar {
    display: flex;
    align-items: center;
    flex: none;
    gap: 21.5px;
    height: 48px;
    padding: 0 0 30px 23px;
    box-sizing: border-box;
    background-color: #343a40;
    font-size: 24.2px;
}

.brand {
    margin-right: 12px;
    color: #fff;
    font-size: 28px;
}

.nav-link {
    color: #9a9da0;
}

/* item card */
.content {
    flex: 1;
    min-height: 0;
    padding-top: 64px;
}

.card {
    width: 1120px;
    margin: 0 auto;
    box-sizing: border-box;
    padding: 24px 26px 0;
    border: 2px solid #dfdfdf;
    border-radius: 8px;
    color: #212529;
}

.card h2 {
    margin: 0 0 0 -1px;
    font-size: 45px;
    font-weight: 400;
    line-height: 53px;
}

.field {
    padding-left: 23px;
    font-size: 25.6px;
    line-height: 38px;
}

.field label {
    display: block;
    margin-bottom: 10px;
}

.field p {
    margin: 0 0 21.5px;
    word-spacing: -1.5px;
}

/* map */
.map {
    position: relative;
    width: 954px;
    height: 592px;
    margin-top: -1px;
    border-style: solid;
    border-width: 4px 4px 4px 2px;
    border-color: #9a9a9a #eee #eee #9a9a9a;
}

.label {
    font-family: "Roboto", sans-serif;
    paint-order: stroke;
    stroke: #fff;
    stroke-width: 3px;
    stroke-opacity: .7;
}

.road { fill: #6e7478; }
.fwy { fill: #7b4a12; stroke: #fee59a; }
.creek { fill: #4a8fd6; }
.poi { fill: #5f7684; }
.home { fill: #3d68c4; }
.place { fill: #c5221f; }
.walk { fill: #4a90e2; }
.hospital { fill: #b4565c; }
.shield { fill: #333; stroke: none; }
.pin-h { fill: #fff; stroke: none; }

.pegman {
    position: absolute;
    left: 895px;
    top: 16px;
    padding: 3px;
    background-color: #fff;
    box-shadow: 0 1px 3px rgba(0, 0, 0, .25);
}

.place-card {
    position: absolute;
    left: 16px;
    top: 16px;
    display: flex;
    width: 568px;
    height: 158px;
    box-sizing: border-box;
    padding: 16px 19px;
    border-radius: 3px;
    background-color: #fff;
    box-shadow: 0 1px 4px rgba(0, 0, 0, .2);
    font-family: "Roboto", sans-serif;
}

.place-info {
    width: 300px;
}

.place-name {
    color: #000;
    font-size: 22.5px;
    font-weight: 500;
    line-height: 26px;
}

.place-address {
    margin-top: 11px;
    color: #5b5b5b;
    font-size: 19.3px;
    line-height: 22px;
}

.place-link {
    display: block;
    margin-top: 24px;
    color: #2a76d6;
    font-size: 19px;
}

.place-action {
    display: flex;
    flex-direction: column;
    align-items: center;
    position: absolute;
    top: 20px;
    gap: 10px;
    color: #3b78e7;
    font-size: 19.4px;
}

.directions { left: 366px; }
.save { left: 502px; gap: 8px; }

/* dock */
.dock {
    position: absolute;
    left: 218px;
    top: 1487px;
    display: flex;
    align-items: flex-start;
    gap: 18px;
    width: 2124px;
    height: 113px;
    box-sizing: border-box;
    padding-left: 15px;
    border-radius: 12px 12px 0 0;
    background-color: #505459;
    box-shadow: 0 0 60px rgba(0, 0, 0, .14);
}

.dock-item {
    display: flex;
    justify-content: center;
    align-items: center;
    position: relative;
    width: 76px;
    height: 108px;
}

.on::after {
    content: "";
    position: absolute;
    left: 34px;
    top: 101px;
    width: 8px;
    height: 8px;
    border-radius: 50%;
    background-color: #000;
}

.dock-sep {
    width: 2px;
    height: 84px;
    margin: 15px 10px 0 15px;
    background-color: #33363a;
}

.petals ellipse {
    mix-blend-mode: multiply;
    opacity: .9;
}

.cal-month { fill: #fff; font-family: "Roboto", sans-serif; }
.cal-day { fill: #222; font-family: "Roboto", sans-serif; font-weight: 300; }
.map-3d { fill: #456; font-family: "Roboto", sans-serif; }
.ij { fill: #fff; font-family: "Liberation Mono", monospace; font-weight: 700; }
.sticky-note { fill: #5c5838; font-family: "Liberation Sans", sans-serif; }
.sticky-eggs { fill: #e2432c; font-family: "Liberation Sans", sans-serif; }
.sticky-milk { fill: #33507e; font-family: "Liberation Sans", sans-serif; }
```
